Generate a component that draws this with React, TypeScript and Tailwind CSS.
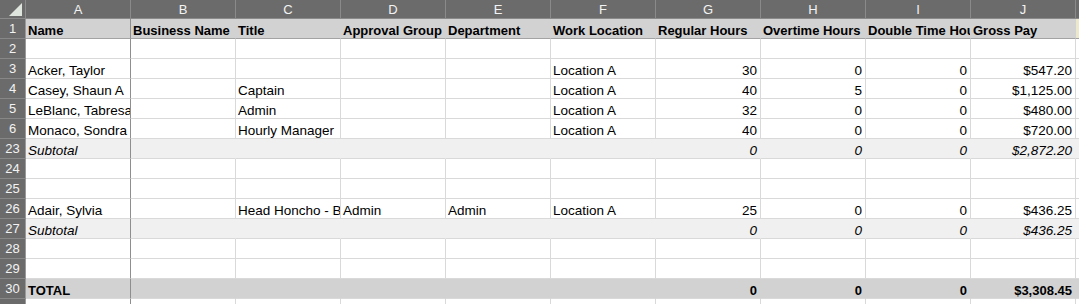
const letters = ["A", "B", "C", "D", "E", "F", "G", "H", "I", "J"];

type Kind = "head" | "data" | "sub" | "total";

type Row = { n: number; kind: Kind; cells: string[] };

const rows: Row[] = [
  {
    n: 1,
    kind: "head",
    cells: ["Name", "Business Name", "Title", "Approval Group", "Department", "Work Location", "Regular Hours", "Overtime Hours", "Double Time Hours", "Gross Pay"],
  },
  { n: 2, kind: "data", cells: [] },
  { n: 3, kind: "data", cells: ["Acker, Taylor", "", "", "", "", "Location A", "30", "0", "0", "$547.20"] },
  { n: 4, kind: "data", cells: ["Casey, Shaun A", "", "Captain", "", "", "Location A", "40", "5", "0", "$1,125.00"] },
  { n: 5, kind: "data", cells: ["LeBlanc, Tabresa", "", "Admin", "", "", "Location A", "32", "0", "0", "$480.00"] },
  { n: 6, kind: "data", cells: ["Monaco, Sondra", "", "Hourly Manager", "", "", "Location A", "40", "0", "0", "$720.00"] },
  { n: 23, kind: "sub", cells: ["Subtotal", "", "", "", "", "", "0", "0", "0", "$2,872.20"] },
  { n: 24, kind: "data", cells: [] },
  { n: 25, kind: "data", cells: [] },
  { n: 26, kind: "data", cells: ["Adair, Sylvia", "", "Head Honcho - Boss", "Admin", "Admin", "Location A", "25", "0", "0", "$436.25"] },
  { n: 27, kind: "sub", cells: ["Subtotal", "", "", "", "", "", "0", "0", "0", "$436.25"] },
  { n: 28, kind: "data", cells: [] },
  { n: 29, kind: "data", cells: [] },
  { n: 30, kind: "total", cells: ["TOTAL", "", "", "", "", "", "0", "0", "0", "$3,308.45"] },
  { n: 31, kind: "data", cells: [] },
];

const rowBg: Record<Kind, string> = {
  head: "bg-[#d2d2d2]",
  data: "bg-white",
  sub: "bg-[#f0f0f0]",
  total: "bg-[#d2d2d2]",
};

// vertical gridlines only show on plain data rows
const rowLine: Record<Kind, string> = {
  head: "border-r-[#d2d2d2]",
  data: "border-r-[#d9d9d9]",
  sub: "border-r-[#f0f0f0]",
  total: "border-r-[#d2d2d2]",
};

const textStyle: Record<Kind, string> = {
  head: "font-bold text-[13px]",
  data: "text-[13.5px]",
  sub: "italic text-[13.5px]",
  total: "font-bold text-[13px]",
};

function Cell({ row, col }: { row: Row; col: number }) {
  const value = row.cells[col] ?? "";
  const numeric = row.kind !== "head" && col >= 6;
  const frozen = col === 0;
  return (
    <div
      className={`flex h-[20px] items-end overflow-hidden whitespace-nowrap border-b border-r leading-[14px] text-black ${rowBg[row.kind]} ${textStyle[row.kind]} ${
        frozen ? "border-r-[#8e8e8e]" : rowLine[row.kind]
      } ${row.kind === "head" ? "border-b-[#a3a3a3]" : "border-b-[#d9d9d9]"} ${numeric ? "justify-end pr-[3px]" : "pl-[2px]"}`}
    >
      {value}
    </div>
  );
}

export default function App() {
  return (
    <div className="h-[304px] w-[1079px] overflow-hidden bg-white font-['Liberation_Sans',Arial,sans-serif]">
      <div className="grid grid-cols-[26px_repeat(10,105px)_1fr]">
        {/* corner */}
        <div className="flex h-[19px] items-start justify-end border-b border-r border-[#8a8a8a] bg-[#6b6b6b] pr-[3px] pt-[3px]">
          <svg width="13" height="13" viewBox="0 0 13 13">
            <polygon points="13,0 13,13 0,13" fill="#dfe6de" />
          </svg>
        </div>
        {letters.map((l) => (
          <div
            key={l}
            className="flex h-[19px] items-center justify-center border-b border-r border-[#8a8a8a] bg-[#6b6b6b] text-[13px] leading-none text-[#f3f3f3]"
          >
            {l}
          </div>
        ))}
        <div className="h-[19px] border-b border-[#8a8a8a] bg-[#6b6b6b]" />

        {rows.map((row) => (
          <div key={row.n} className="contents">
            <div className="flex h-[20px] items-center justify-center border-b border-r border-b-[#878787] border-r-[#9a9a9a] bg-[#6b6b6b] text-[13px] leading-none text-[#f3f3f3]">
              {row.n}
            </div>
            {letters.map((_, i) => (
              <Cell key={i} row={row} col={i} />
            ))}
            <div
              className={`h-[20px] border-b ${row.kind === "head" ? "border-b-[#a3a3a3] bg-[#ece8cc]" : `border-b-[#d9d9d9] ${rowBg[row.kind]}`}`}
            />
          </div>
        ))}
      </div>
    </div>
  );
}
